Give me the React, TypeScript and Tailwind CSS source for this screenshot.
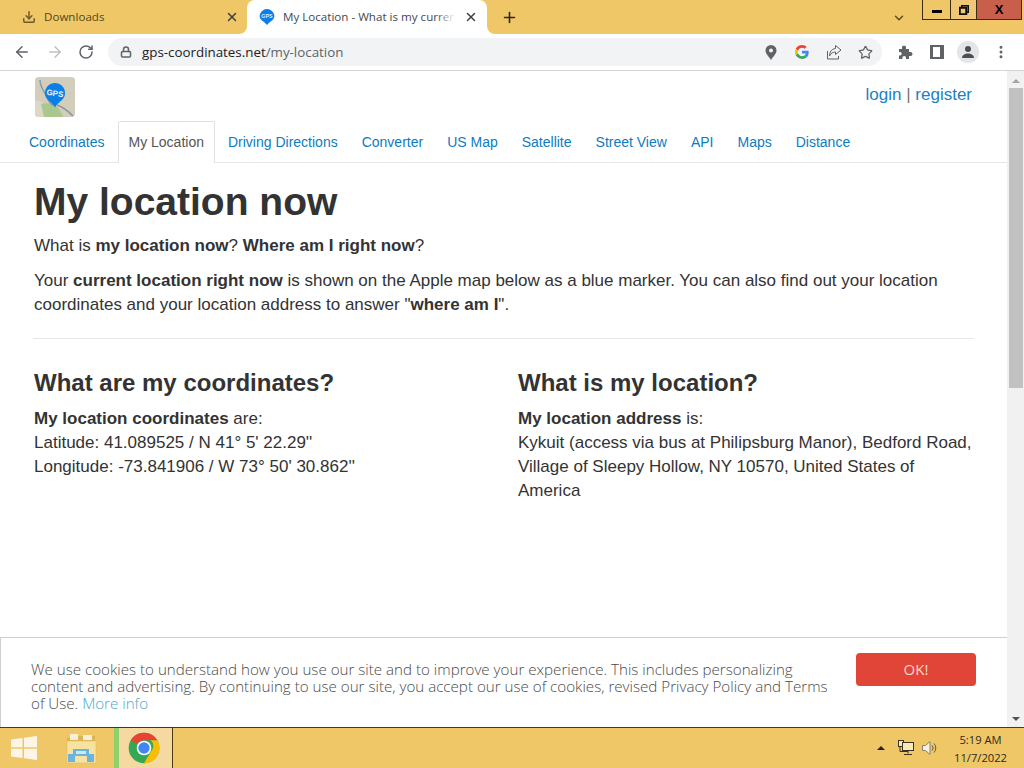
import React from "react";
import { ArrowLeft, ArrowRight, RotateCw, Lock, X, Plus, ChevronDown, Star, EllipsisVertical, Download } from "lucide-react";

const navItems = ["Coordinates", "My Location", "Driving Directions", "Converter", "US Map", "Satellite", "Street View", "API", "Maps", "Distance"];

function GpsPin({ size }: { size: number }) {
  return (
    <svg width={size} height={size} viewBox="0 0 24 24">
      <path d="M12 0a11 11 0 0 1 11 11c0 6-6.500 7.500-11 13C7.500 18.500 1 17 1 11A11 11 0 0 1 12 0z" fill="#0b7fe8" />
      <text x="12" y="14" textAnchor="middle" fontSize="8" fontWeight="700" fill="#d9ecfd" fontFamily="Liberation Sans, sans-serif">GPS</text>
    </svg>
  );
}

function Logo() {
  return (
    <svg width="40" height="40" viewBox="0 0 40 40" className="rounded-[3px]">
      <rect width="40" height="40" rx="3" fill="#d3cdbb" />
      <path d="M0 24 C 6 22, 10 26, 14 40 L 0 40 Z" fill="#dcd8c6" />
      <path d="M6 27 C 14 25, 24 26, 28 40 L 9 40 Z" fill="#aac88e" />
      <path d="M5 3 C 5 10, 9 14, 12 20 S 14 26, 18 28" fill="none" stroke="#7f9bb5" strokeWidth="1.500" />
      <path d="M22 28 C 28 30, 33 34, 38 39" fill="none" stroke="#8b9299" strokeWidth="1.500" />
      <path d="M20 6a10 10 0 0 1 10 10.500c0 6.500-7 8-10 14-3-6-10-7.500-10-14A10 10 0 0 1 20 6z" fill="#0b7fe8" />
      <text x="20" y="19" textAnchor="middle" fontSize="8" fontWeight="700" fill="#e8f3fd" fontFamily="Liberation Sans, sans-serif" transform="rotate(8 20 16)">GPS</text>
    </svg>
  );
}

function GoogleG() {
  return (
    <svg width="14" height="14" viewBox="0 0 48 48">
      <path fill="#EA4335" d="M24 9.500c3.500 0 6.700 1.300 9.100 3.500l6.800-6.800C35.800 2.400 30.300 0 24 0 14.600 0 6.500 5.400 2.600 13.200l7.900 6.100C12.400 13.700 17.700 9.500 24 9.500z" />
      <path fill="#4285F4" d="M46.900 24.500c0-1.600-.1-3.100-.4-4.500H24v9h12.900c-.6 3-2.200 5.500-4.800 7.200l7.700 6c4.500-4.200 7.100-10.300 7.100-17.700z" />
      <path fill="#FBBC05" d="M10.500 28.700A14.500 14.500 0 0 1 10.500 19.300l-7.900-6.100a24 24 0 0 0 0 21.600z" />
      <path fill="#34A853" d="M24 48c6.500 0 11.900-2.100 15.900-5.800l-7.700-6c-2.200 1.400-4.900 2.300-8.200 2.300-6.300 0-11.600-4.200-13.500-9.900l-7.900 6.100C6.500 42.600 14.600 48 24 48z" />
    </svg>
  );
}

function ShareIcon() {
  return (
    <svg width="16" height="16" viewBox="0 0 16 16" fill="none" stroke="#5f6368" strokeWidth="1">
      <path d="M1.500 7v8h11v-3" />
      <path d="M9.500 1.500 15 6l-5.500 4.500V8C7 8 5 9 3.500 12c0-4 2-7 6-7.500z" />
    </svg>
  );
}

function LocationPin() {
  return (
    <svg width="12" height="15" viewBox="0 0 12 15">
      <path fillRule="evenodd" d="M6 0a5.500 5.500 0 0 1 5.500 5.500C11.500 9 8 11.500 6 15 4 11.500.5 9 .5 5.500A5.500 5.500 0 0 1 6 0zm0 3.500a2 2 0 1 0 0 4 2 2 0 0 0 0-4z" fill="#5f6368" />
    </svg>
  );
}

function PuzzleIcon() {
  return (
    <svg width="15" height="15" viewBox="0 0 15 15" fill="#5f6368">
      <path d="M1 4h3V2.500a2 2 0 0 1 4 0V4h3v3h1.500a2 2 0 0 1 0 4H11v3H8v-1.200a1.800 1.800 0 0 0-3.600 0V14H1v-3.500h1a1.700 1.700 0 0 0 0-3.400H1z" />
    </svg>
  );
}

function WindowsLogo() {
  return (
    <svg width="28" height="26" viewBox="0 0 28 26" fill="#fdf6e6">
      <path d="M1 4.500 12.500 3v9.300H1z" />
      <path d="M14 2.700 27 1v11.300H14z" />
      <path d="M1 13.700h11.500V23L1 21.500z" />
      <path d="M14 13.700h13V25l-13-1.800z" />
    </svg>
  );
}

function FolderIcon() {
  return (
    <svg width="32" height="32" viewBox="0 0 32 32">
      <path d="M2 6h10l2-2h16v7H2z" fill="#dcb656" />
      <rect x="5" y="2" width="8" height="6" fill="#f6f0d8" />
      <rect x="18" y="3" width="9" height="5" fill="#f6f0d8" />
      <rect x="2" y="9" width="29" height="22" fill="#f8e2a0" stroke="#d9b65c" strokeWidth="0.500" />
      <path d="M3 22h5v-5h16v5h5v8h-7v-6H10v6H3z" fill="#6bb3e0" />
      <rect x="11" y="19" width="10" height="3" fill="#cde8f6" />
    </svg>
  );
}

function ChromeLogo() {
  return (
    <svg width="32" height="32" viewBox="0 0 48 48">
      <circle cx="24" cy="24" r="23" fill="#34A853" />
      <path d="M24 1a23 23 0 0 1 20 11.500H24A11.500 11.500 0 0 0 14 18L4 12.500A23 23 0 0 1 24 1z" fill="#EA4335" />
      <path d="M44 12.500A23 23 0 0 1 24 47l10-17a11.500 11.500 0 0 0 0-17.500z" fill="#FBBC05" />
      <circle cx="24" cy="24" r="11" fill="#fff" />
      <circle cx="24" cy="24" r="8.500" fill="#4285F4" />
    </svg>
  );
}

function NetworkIcon() {
  return (
    <svg width="18" height="18" viewBox="0 0 18 18" fill="#f7e9b8" stroke="#3a3320" strokeWidth="1">
      <rect x="1.500" y="1.500" width="5" height="6" />
      <rect x="5.500" y="3.500" width="11" height="8" />
      <path d="M3 7.500v5h8M11 11.500v3M7 15.500h8" fill="none" />
    </svg>
  );
}

function SpeakerIcon() {
  return (
    <svg width="18" height="18" viewBox="0 0 18 18" fill="none">
      <path d="M1.500 6.500h3L9 2.500v13l-4.500-4h-3z" fill="#f5f1e4" stroke="#6f6a5a" strokeWidth="0.800" />
      <path d="M11 6.500a3.500 3.500 0 0 1 0 5M13 4.500a6.500 6.500 0 0 1 0 9" stroke="#5c5a52" strokeWidth="1" />
    </svg>
  );
}

function TabStrip() {
  return (
    <div className="flex h-[34px] shrink-0 bg-[#efc766] font-['Open_Sans',sans-serif] text-[11.600px]">
      <div className="flex w-[247px] items-center pl-[22px] pr-[8px] text-[#55481f]">
        <Download size={14} strokeWidth={2.5} className="text-[#6b5a2a]" />
        <span className="ml-[8px] flex-1">Downloads</span>
        <X size={14} strokeWidth={2.5} className="text-[#3f3f3f]" />
      </div>
      <div className="relative flex w-[240px] items-center rounded-t-[8px] bg-white pl-[12px] text-[#45494e]">
        <div className="absolute bottom-0 left-[-8px] h-[8px] w-[8px] bg-white">
          <div className="h-full w-full rounded-br-[8px] bg-[#efc766]" />
        </div>
        <div className="absolute bottom-0 right-[-8px] h-[8px] w-[8px] bg-white">
          <div className="h-full w-full rounded-bl-[8px] bg-[#efc766]" />
        </div>
        <GpsPin size={16} />
        <span className="relative ml-[8px] w-[172px] overflow-hidden whitespace-nowrap">
          My Location - What is my current
          <span className="absolute bottom-0 right-0 top-0 w-[18px] bg-gradient-to-r from-transparent to-white" />
        </span>
        <X size={14} strokeWidth={2.5} className="ml-[9px] text-[#3f4246]" />
      </div>
      <div className="flex w-[44px] items-center justify-center">
        <Plus size={17} strokeWidth={2.25} className="text-[#2f2a18]" />
      </div>
      <div className="flex flex-1 items-center justify-end pb-[2px] pr-[118px]">
        <ChevronDown size={14} strokeWidth={2.5} className="mt-[3px] text-[#5a4a20]" />
      </div>
      <div className="absolute right-[2px] top-0 flex h-[20px] border border-t-0 border-[#3b2c10]">
        <div className="flex w-[28px] items-center justify-center border-r border-[#3b2c10] bg-[#efc766]">
          <div className="mt-[4px] h-[3px] w-[10px] bg-black" />
        </div>
        <div className="flex w-[25px] items-center justify-center bg-[#f0c777]">
          <svg width="10" height="10" viewBox="0 0 10 10" fill="none" stroke="#111" strokeWidth="1.500">
            <rect x="2.750" y="0.750" width="6.500" height="6.500" />
            <rect x="0.750" y="2.750" width="6.500" height="6.500" fill="#f0c777" strokeWidth="2" />
          </svg>
        </div>
        <div className="flex w-[45px] items-center justify-center border-l border-[#3b2c10] bg-[#c75f4b] font-['Liberation_Sans',sans-serif] text-[13px] font-bold text-black">X</div>
      </div>
    </div>
  );
}

function Toolbar() {
  return (
    <div className="flex h-[37px] shrink-0 items-center border-b border-[#d4d4d4] bg-white">
      <ArrowLeft size={18} strokeWidth={2} className="ml-[13px] text-[#5f6368]" />
      <ArrowRight size={18} strokeWidth={2} className="ml-[15px] text-[#bdc1c6]" />
      <RotateCw size={16} strokeWidth={2.25} className="ml-[14px] text-[#5f6368]" />
      <div className="ml-[14px] flex h-[28px] w-[774px] items-center rounded-full bg-[#f1f3f4] pl-[12px] font-['Open_Sans',sans-serif] text-[13.350px]">
        <Lock size={12} strokeWidth={3} className="text-[#5f6368]" />
        <span className="ml-[10px] text-[#202124]">gps-coordinates.net</span>
        <span className="text-[#5f6368]">/my-location</span>
        <span className="ml-auto"><LocationPin /></span>
        <span className="ml-[18px]"><GoogleG /></span>
        <span className="ml-[17px]"><ShareIcon /></span>
        <Star size={15} strokeWidth={2} className="ml-[16px] mr-[9px] text-[#5f6368]" />
      </div>
      <span className="ml-[16px]"><PuzzleIcon /></span>
      <div className="ml-[17px] flex h-[14px] w-[14px] justify-end border-2 border-[#5f6368] bg-[#5f6368]">
        <div className="mr-[2px] h-full w-[7px] bg-white" />
      </div>
      <div className="ml-[13px] flex h-[22px] w-[22px] items-center justify-center rounded-full bg-[#e3e5e8]">
        <svg width="14" height="14" viewBox="0 0 14 14" fill="#4a4e52">
          <circle cx="7" cy="4" r="3" />
          <path d="M1 13c0-3 3-4.500 6-4.500s6 1.500 6 4.500z" />
        </svg>
      </div>
      <EllipsisVertical size={16} strokeWidth={2.5} className="ml-[14px] text-[#5f6368]" />
    </div>
  );
}

function Scrollbar() {
  return (
    <div className="flex w-[17px] shrink-0 flex-col items-center bg-[#f1f1f1]">
      <div className="flex h-[17px] items-center justify-center">
        <div className="mt-[2px] h-0 w-0 border-x-[4px] border-b-[4px] border-x-transparent border-b-[#a3a3a3]" />
      </div>
      <div className="h-[300px] w-[14px] bg-[#c1c1c1]" />
      <div className="flex-1" />
      <div className="flex h-[17px] items-center justify-center">
        <div className="h-0 w-0 border-x-[4px] border-t-[4px] border-x-transparent border-t-[#505050]" />
      </div>
    </div>
  );
}

function Page() {
  return (
    <div className="min-w-0 flex-1 bg-white font-['Liberation_Sans',sans-serif] text-[17px] leading-[24px] text-[#333]">
      <div className="flex h-[50px] items-start justify-between pl-[35px] pr-[35px] pt-[6px]">
        <Logo />
        <div className="mt-[6px] text-[17px] leading-[24px] text-[#777]">
          <a className="text-[#1a82c4]">login</a> | <a className="text-[#1a82c4]">register</a>
        </div>
      </div>
      <div className="flex h-[42px] gap-[2px] border-b border-[#e7e7e7] pl-[18px] text-[14px] text-[#0c7cc0]">
        {navItems.map((n) => (
          <div
            key={n}
            className={
              n === "My Location"
                ? "-mb-px flex items-center rounded-t-[2px] border border-[#e1e1e1] border-b-white bg-white px-[10px] text-[#555]"
                : "flex items-center border border-transparent px-[10px]"
            }
          >
            {n}
          </div>
        ))}
      </div>
      <div className="pl-[34px] pr-[33px]">
        <h1 className="mt-[16px] text-[39px] font-bold leading-[46px]">My location now</h1>
        <p className="mt-[9px]">What is <b>my location now</b>? <b>Where am I right now</b>?</p>
        <p className="mt-[11px]">
          Your <b>current location right now</b> is shown on the Apple map below as a blue marker. You can also find out your location coordinates and your location address to answer "<b>where am I</b>".
        </p>
        <hr className="-ml-px mt-[21px] border-[#e7e7e7]" />
        <div className="mt-[28px] grid grid-cols-[484px_1fr]">
          <div>
            <h2 className="text-[24px] font-bold leading-[32px]">What are my coordinates?</h2>
            <p className="mt-[8px]"><b>My location coordinates</b> are:<br />Latitude: 41.089525 / N 41° 5' 22.29''<br />Longitude: -73.841906 / W 73° 50' 30.862''</p>
          </div>
          <div>
            <h2 className="text-[24px] font-bold leading-[32px]">What is my location?</h2>
            <p className="mt-[8px]"><b>My location address</b> is:<br />Kykuit (access via bus at Philipsburg Manor), Bedford Road, Village of Sleepy Hollow, NY 10570, United States of America</p>
          </div>
        </div>
      </div>
    </div>
  );
}

function CookieBanner() {
  return (
    <div className="absolute bottom-0 left-0 right-0 flex h-[90px] items-start border-l border-t border-[#cfcfcf] bg-white pl-[30px] pr-[31px]">
      <p className="mt-[23px] w-[805px] font-['Open_Sans',sans-serif] text-[15.150px] font-light leading-[17px] text-[#4a4a4a]">
        We use cookies to understand how you use our site and to improve your experience. This includes personalizing content and advertising. By continuing to use our site, you accept our use of cookies, revised Privacy Policy and Terms of Use. <a className="text-[#4ba9c8]">More info</a>
      </p>
      <button className="ml-auto mt-[15px] h-[33px] w-[120px] rounded-[4px] bg-[#e04537] font-['Open_Sans',sans-serif] text-[15px] text-[#fbd6d0]">OK!</button>
    </div>
  );
}

function Taskbar() {
  return (
    <div className="flex h-[41px] shrink-0 items-center border-t border-[#4b3a10] bg-[#efc766]">
      <div className="ml-[10px] flex w-[28px] items-center"><WindowsLogo /></div>
      <div className="ml-[27px] flex w-[32px]"><FolderIcon /></div>
      <div className="ml-[17px] flex h-full w-[59px] items-center justify-center border-l-[5px] border-r border-l-[#8fd16a] border-r-[#4b3a10] bg-[#f6d9a0] pr-[4px]">
        <ChromeLogo />
      </div>
      <div className="ml-auto flex items-center">
        <div className="mr-[12px] h-0 w-0 border-x-[4px] border-b-[4px] border-x-transparent border-b-[#222]" />
        <NetworkIcon />
        <span className="ml-[6px]"><SpeakerIcon /></span>
        <div className="ml-[15px] mr-[17px] mt-[1px] text-center font-['Open_Sans',sans-serif] text-[11.200px] leading-[18px] text-[#2e2a1c]">
          5:19 AM
          <br />
          11/7/2022
        </div>
      </div>
    </div>
  );
}

export default function App() {
  return (
    <div className="relative flex h-[768px] w-[1024px] flex-col overflow-hidden bg-white">
      <TabStrip />
      <Toolbar />
      <div className="relative flex min-h-0 flex-1">
        <Page />
        <Scrollbar />
        <div className="absolute bottom-0 left-0 right-[17px]">
          <CookieBanner />
        </div>
      </div>
      <Taskbar />
    </div>
  );
}
